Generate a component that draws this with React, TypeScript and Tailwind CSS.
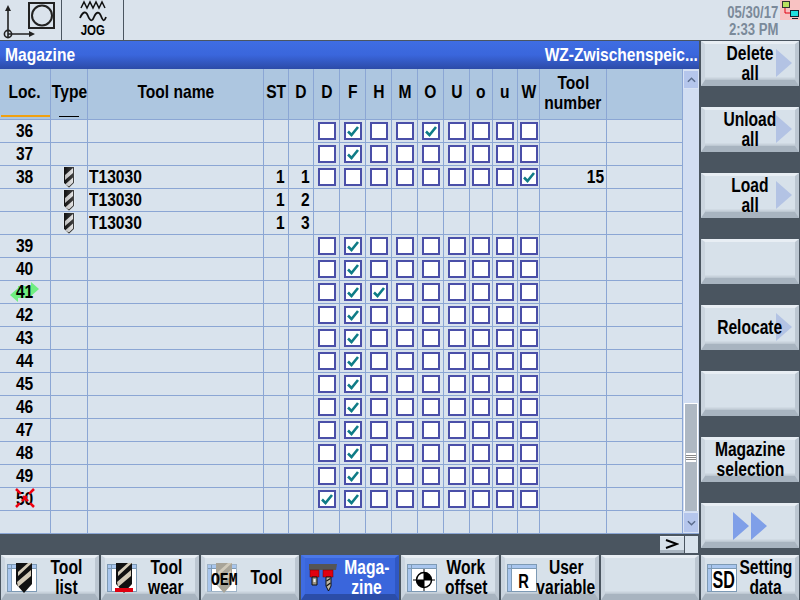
import React from "react";

const FONT = "font-['Liberation_Sans',sans-serif] font-bold";
const GRID = "grid grid-cols-[51px_37px_176px_25px_25px_26px_26px_26px_26px_26px_26px_23px_25px_22px_67px_76px]";

const T = ({ children, o, narrow }: { children?: React.ReactNode; o?: "l" | "r"; narrow?: boolean }) => (
  <span
    className={`inline-block whitespace-nowrap ${narrow ? "scale-x-[0.78]" : "scale-x-[0.82]"} ${
      o === "l" ? "origin-left" : o === "r" ? "origin-right" : "origin-center"
    }`}
  >
    {children}
  </span>
);

const Check = () => (
  <svg viewBox="0 0 14 14" className="w-[14px] h-[14px]">
    <path d="M2 7.5 L5.5 11 L12 3" fill="none" stroke="#0f7c86" strokeWidth="2.6" />
  </svg>
);

const Box = ({ on }: { on?: boolean }) => (
  <div className="w-[18px] h-[18px] border-2 border-[#4a4fa8] bg-white flex items-center justify-center">
    {on ? <Check /> : null}
  </div>
);

const TypeIcon = () => (
  <svg viewBox="0 0 12 21" className="w-[12px] h-[21px]">
    <defs>
      <linearGradient id="tg" x1="0" x2="1" y1="0" y2="0">
        <stop offset="0" stopColor="#bdbdbd" />
        <stop offset="1" stopColor="#e4e4e4" />
      </linearGradient>
      <linearGradient id="tk" x1="0" x2="1" y1="0" y2="0">
        <stop offset="0" stopColor="#111" />
        <stop offset="1" stopColor="#444" />
      </linearGradient>
    </defs>
    <path d="M1 0H11V16L6 21L1 16Z" fill="url(#tk)" />
    <path d="M2 8L10 1V6L2 13ZM2 17.5L10 10.5V15.5L6 19.5Z" fill="url(#tg)" />
    <path d="M0.5 0V16.2L6 21L11.5 16.2V0" fill="none" stroke="#e8eef4" strokeWidth="0.6" />
  </svg>
);

const FrameIcon = ({ children, faint }: { children?: React.ReactNode; faint?: boolean }) => (
  <div
    className={`relative w-[30px] h-[28px] border bg-[#a9c6ee] pl-[4px] pt-[4px] shrink-0 ${
      faint ? "border-[#9fb4c8]" : "border-[#7d9ab5]"
    }`}
  >
    <div className="absolute left-[3px] top-0 bottom-0 w-px bg-[#7d9ab5]" />
    <div className="absolute left-0 right-0 top-[3px] h-px bg-[#7d9ab5]" />
    <div className="w-full h-full bg-white flex items-center justify-center text-black">{children}</div>
  </div>
);

const BigDrill = ({ red, faded }: { red?: boolean; faded?: boolean }) => (
  <svg viewBox="0 0 18 30" className="absolute left-[7px] top-[-2px] w-[18px] h-[30px]">
    <path d="M1 0H17V21L9 30L1 21Z" fill={faded ? "#a8a498" : "#111"} />
    <path d="M4 8L13 0H17L3 13V9ZM2 19L16 7V13L3 24Z" fill={faded ? "#cfc9ba" : "#d4cbb8"} />
    {red ? <rect x="0" y="25" width="18" height="4" fill="#e00010" /> : null}
  </svg>
);

const Target = () => (
  <svg viewBox="0 0 22 22" className="w-[22px] h-[22px]">
    <circle cx="11" cy="11" r="7.5" fill="white" stroke="#000" strokeWidth="1.5" />
    <path d="M11 11V3.5A7.5 7.5 0 0 1 18.5 11ZM11 11V18.5A7.5 7.5 0 0 1 3.5 11Z" fill="#000" />
    <path d="M0 11H22M11 0V22" stroke="#000" strokeWidth="1" />
  </svg>
);

const MagIcon = () => (
  <svg viewBox="0 0 31 30" className="w-[31px] h-[30px] shrink-0">
    <path d="M2 1H30L29 7H2Z" fill="#555" />
    <rect x="3" y="7" width="9" height="7" fill="#e00010" stroke="#600" strokeWidth="0.5" />
    <rect x="16" y="7" width="10" height="7" fill="#e00010" stroke="#600" strokeWidth="0.5" />
    <path d="M5 14H10V22H5Z" fill="#9a9585" stroke="#111" />
    <path d="M6.5 16H8.5V19H6.5Z" fill="#eee" />
    <path d="M19 14H24V23L21.5 28L19 23Z" fill="#c0b9a8" stroke="#111" />
    <path d="M19.5 18L23.5 15.5M19.5 23L23.5 20" stroke="#111" strokeWidth="1.2" />
  </svg>
);

const Arrow = () => (
  <svg viewBox="0 0 16 28" className="w-[16px] h-[28px] absolute right-[3px] top-[5px]">
    <path d="M0 0L16 14L0 28Z" fill="#b3c3e4" />
  </svg>
);

type KeyProps = {
  lines?: string[];
  arrow?: boolean;
  active?: boolean;
  icon?: React.ReactNode;
  children?: React.ReactNode;
};

const Softkey = ({ lines, arrow, active, icon, children }: KeyProps) => (
  <div
    className={`relative w-[98px] h-[45px] border-solid border-t-[3px] border-l-[4px] border-r-[4px] border-b-[6px] flex items-center ${
      active
        ? "bg-[#3a66dc] border-t-[#4b78e8] border-l-[#3f6ce2] border-r-[#2f57c4] border-b-[#2b4da8] text-white"
        : "bg-[#d7e1ea] border-t-[#e8eef4] border-l-[#cbd5df] border-r-[#bcc7d2] border-b-[#a8b4c0] text-black shadow-[inset_0_-1px_0_#bec9d3,inset_0_-2px_0_#c8d2dc,inset_0_-3px_0_#d0dae3]"
    }`}
  >
    {arrow ? <Arrow /> : null}
    {icon ? <div className="ml-[2px] shrink-0 mt-[4px]">{icon}</div> : null}
    {lines ? (
      <div className="relative flex-1 w-0 min-w-0 flex flex-col items-center text-[20px] leading-[20px] mt-[1px]">
        {lines.map((l) => (
          <T key={l} narrow>
            {l}
          </T>
        ))}
      </div>
    ) : null}
    {children}
  </div>
);

const HEAD = ["Loc.", "Type", "Tool name", "ST", "D", "D", "F", "H", "M", "O", "U", "o", "u", "W"];

type Row = {
  loc?: string;
  tool?: boolean;
  st?: string;
  d?: string;
  boxes?: number[];
  num?: string;
  mark?: "move" | "x";
};

const ROWS: Row[] = [
  { loc: "36", boxes: [1, 4] },
  { loc: "37", boxes: [1] },
  { loc: "38", tool: true, st: "1", d: "1", boxes: [8], num: "15" },
  { tool: true, st: "1", d: "2" },
  { tool: true, st: "1", d: "3" },
  { loc: "39", boxes: [1] },
  { loc: "40", boxes: [1] },
  { loc: "41", boxes: [1, 2], mark: "move" },
  { loc: "42", boxes: [1] },
  { loc: "43", boxes: [1] },
  { loc: "44", boxes: [1] },
  { loc: "45", boxes: [1] },
  { loc: "46", boxes: [1] },
  { loc: "47", boxes: [1] },
  { loc: "48", boxes: [1] },
  { loc: "49", boxes: [1] },
  { loc: "50", boxes: [0, 1], mark: "x" },
  {},
];

const CELL = "border-r border-b border-[#8ba6d4] h-[23px] flex items-center";

const TableRow = ({ r }: { r: Row }) => (
  <div className={`${GRID} text-black text-[19px]`}>
    <div className={`${CELL} justify-center relative`}>
      {r.mark === "move" ? (
        <svg viewBox="0 0 29 20" className="absolute left-[10px] top-[1px] w-[29px] h-[20px]">
          <path d="M0 13L8 6V10H22V16H8V20Z" fill="#6fee82" />
          <path d="M29 7L21 0V4H8V10H21V14Z" fill="#6fee82" />
        </svg>
      ) : null}
      <span className="relative">
        <T>{r.loc}</T>
      </span>
      {r.mark === "x" ? (
        <svg viewBox="0 0 22 20" className="absolute left-[14px] top-[0px] w-[22px] h-[20px]">
          <path d="M2 1L20 19M20 1L2 19" stroke="#f00010" strokeWidth="2.5" strokeDasharray="7 3" />
        </svg>
      ) : null}
    </div>
    <div className={`${CELL} justify-center`}>{r.tool ? <TypeIcon /> : null}</div>
    <div className={`${CELL} pl-[1px]`}>
      {r.tool ? <T o="l">T13030</T> : null}
    </div>
    <div className={`${CELL} justify-end pr-[3px]`}>
      <T o="r">{r.st}</T>
    </div>
    <div className={`${CELL} justify-end pr-[3px]`}>
      <T o="r">{r.d}</T>
    </div>
    {Array.from({ length: 9 }).map((_, i) => (
      <div key={i} className={`${CELL} justify-center`}>
        {r.boxes ? <Box on={r.boxes.includes(i)} /> : null}
      </div>
    ))}
    <div className={`${CELL} justify-end pr-[2px]`}>
      <T o="r">{r.num}</T>
    </div>
    <div className={CELL} />
  </div>
);

const ScrollBtn = ({ up, className }: { up?: boolean; className: string }) => (
  <div className={`w-[16px] bg-[#d9e3f4] p-px ${className}`}>
    <div className="w-full h-full bg-[#b5c6ec] flex items-center justify-center">
      <svg viewBox="0 0 10 6" className="w-[9px] h-[6px]">
        <path d={up ? "M1 5L5 1L9 5" : "M1 1L5 5L9 1"} fill="none" stroke="#5a6c8c" strokeWidth="1.6" />
      </svg>
    </div>
  </div>
);

export default function App() {
  return (
    <div className={`w-[800px] h-[600px] overflow-hidden bg-[#4a5560] flex flex-col ${FONT}`}>
      {/* top status */}
      <div className="h-[40px] bg-[#dae3ec] flex shrink-0 relative">
        <div className="w-[62px] border-r border-[#4a5560]">
          <svg viewBox="0 0 61 40" className="w-[61px] h-[40px]">
            <g fill="none" stroke="#222" strokeWidth="1.6">
              <path d="M8 38V8M8 34H33" />
              <circle cx="8" cy="34" r="3.6" />
              <rect x="29" y="3" width="25" height="25" strokeWidth="2" />
              <circle cx="42" cy="15.5" r="10" strokeWidth="2" />
            </g>
            <path d="M8 5L11 11H5ZM35 34L29 31V37Z" fill="#222" />
          </svg>
        </div>
        <div className="w-[62px] border-r border-[#4a5560] flex flex-col items-center">
          <svg viewBox="0 0 30 24" className="w-[30px] h-[24px]">
            <path d="M3 8L6 2L9 8L12 2L15 8L18 2L21 8L24 2L27 8" fill="none" stroke="#111" strokeWidth="1.5" />
            <path d="M2 18C5 11 8 11 10 16S14 22 16 17S21 11 23 16S26 22 28 17" fill="none" stroke="#111" strokeWidth="1.8" />
          </svg>
          <span className="text-[14px] leading-[13px] text-black">
            <T>JOG</T>
          </span>
        </div>
        <div className="flex-1" />
        <div className="flex flex-col items-end text-[#7b8a9a] text-[16px] leading-[17px] pt-[4px] pr-[2px]">
          <T o="r">05/30/17</T>
          <T o="r">2:33 PM</T>
        </div>
        <div className="w-[20px] h-[20px] bg-[#f8c2c2] shrink-0">
          <svg viewBox="0 0 20 20" className="w-[20px] h-[20px]">
            <rect x="2.5" y="1.5" width="7" height="6" fill="#b8e060" stroke="#333" />
            <path d="M5 8V13H10" fill="none" stroke="#e00010" strokeWidth="1" />
            <rect x="10.5" y="10.5" width="8" height="6" fill="#20e0e0" stroke="#123" />
            <path d="M12 18.5H18" stroke="#123" />
          </svg>
        </div>
      </div>

      <div className="flex flex-1 mt-px">
        <div className="w-[701px] shrink-0 flex flex-col">
          {/* title */}
          <div className="h-[28px] w-[699px] bg-gradient-to-b from-[#3f6de2] via-[#3a66dc] to-[#2c4ba8] text-white text-[19px] flex items-center justify-between pl-[5px] pr-[1px]">
            <T o="l">Magazine</T>
            <T o="r">WZ-Zwischenspeic...</T>
          </div>
          {/* table */}
          <div className="flex w-[699px] bg-[#d9e3ed]">
            <div className="w-[683px]">
              <div className={`${GRID} bg-[#adc6e0] text-black text-[19px]`}>
                {HEAD.map((h, i) => (
                  <div
                    key={i}
                    className="relative h-[51px] pb-[3px] border-r border-b border-[#8ba6d4] flex items-center justify-center"
                  >
                    <T>{h}</T>
                    {i === 0 ? <div className="absolute left-[1px] right-0 bottom-[2px] h-[2px] bg-[#f0a010]" /> : null}
                    {i === 1 ? <div className="absolute left-[8px] right-[8px] bottom-[2px] h-px bg-black" /> : null}
                  </div>
                ))}
                <div className="h-[51px] pb-[3px] border-r border-b border-[#8ba6d4] flex flex-col items-center justify-center leading-[20px]">
                  <T>Tool</T>
                  <T>number</T>
                </div>
                <div className="h-[51px] border-r border-b border-[#8ba6d4]" />
              </div>
              {ROWS.map((r, i) => (
                <TableRow key={i} r={r} />
              ))}
            </div>
            {/* scrollbar */}
            <div className="w-[16px] bg-[#d2def2] flex flex-col border-b border-[#8ba6d4]">
              <ScrollBtn up className="h-[19px] mt-px" />
              <div className="flex-1" />
              <div className="h-[108px] mx-px bg-[#aeb8c3] border-t border-x border-white rounded-t-[1px] flex items-center justify-center">
                <div className="w-[10px] h-[9px] border-y border-white bg-[linear-gradient(#fff_1px,#888_1px,#888_2px,#fff_2px,#fff_3px,#888_3px,#888_4px,#fff_4px)] bg-[length:100%_4px]" />
              </div>
              <ScrollBtn className="h-[21px] mt-[1px]" />
            </div>
          </div>
          {/* h scroll */}
          <div className="h-[21px] w-[699px] flex justify-end items-center pr-[1px] gap-px">
            <div className="w-[24px] h-[17px] bg-[#d7e1ea] border-b-[3px] border-b-[#a8b4c0] border-t border-t-[#e8eef4] flex items-center justify-center">
              <svg viewBox="0 0 14 10" className="w-[14px] h-[10px]">
                <path d="M1 1L12 5L1 9" fill="none" stroke="#000" strokeWidth="2" />
              </svg>
            </div>
            <div className="w-[13px] h-[17px] bg-[#d9e3ed]" />
          </div>
        </div>

        {/* right softkeys */}
        <div className="flex flex-col gap-[21px]">
          <Softkey lines={["Delete", "all"]} arrow />
          <Softkey lines={["Unload", "all"]} arrow />
          <Softkey lines={["Load", "all"]} arrow />
          <Softkey />
          <Softkey lines={["Relocate"]} arrow />
          <Softkey />
          <Softkey lines={["Magazine", "selection"]} />
          <Softkey>
            <svg viewBox="0 0 34 28" className="w-[34px] h-[28px] mx-auto mt-[3px]">
              <path d="M0 0L16 14L0 28ZM18 0L34 14L18 28Z" fill="#7f9fe8" />
            </svg>
          </Softkey>
        </div>
      </div>

      {/* bottom softkeys */}
      <div className="flex gap-[2px] pl-px shrink-0">
        <Softkey
          lines={["Tool", "list"]}
          icon={
            <FrameIcon>
              <BigDrill />
            </FrameIcon>
          }
        />
        <Softkey
          lines={["Tool", "wear"]}
          icon={
            <FrameIcon>
              <BigDrill red />
            </FrameIcon>
          }
        />
        <Softkey
          lines={["Tool"]}
          icon={
            <FrameIcon faint>
              <BigDrill faded />
              <span className="relative font-['Liberation_Mono',monospace] font-bold text-[18px] leading-[15px]">
                <T>OEM</T>
              </span>
            </FrameIcon>
          }
        />
        <Softkey active lines={["Maga-", "zine"]} icon={<MagIcon />} />
        <Softkey
          lines={["Work", "offset"]}
          icon={
            <FrameIcon>
              <Target />
            </FrameIcon>
          }
        />
        <Softkey
          lines={["User", "variable"]}
          icon={
            <FrameIcon>
              <span className="inline-block scale-x-[0.7] text-[21px] leading-none">R</span>
            </FrameIcon>
          }
        />
        <Softkey />
        <Softkey
          lines={["Setting", "data"]}
          icon={
            <FrameIcon>
              <span className="inline-block scale-x-[0.67] text-[24px] leading-none">SD</span>
            </FrameIcon>
          }
        />
      </div>
    </div>
  );
}
